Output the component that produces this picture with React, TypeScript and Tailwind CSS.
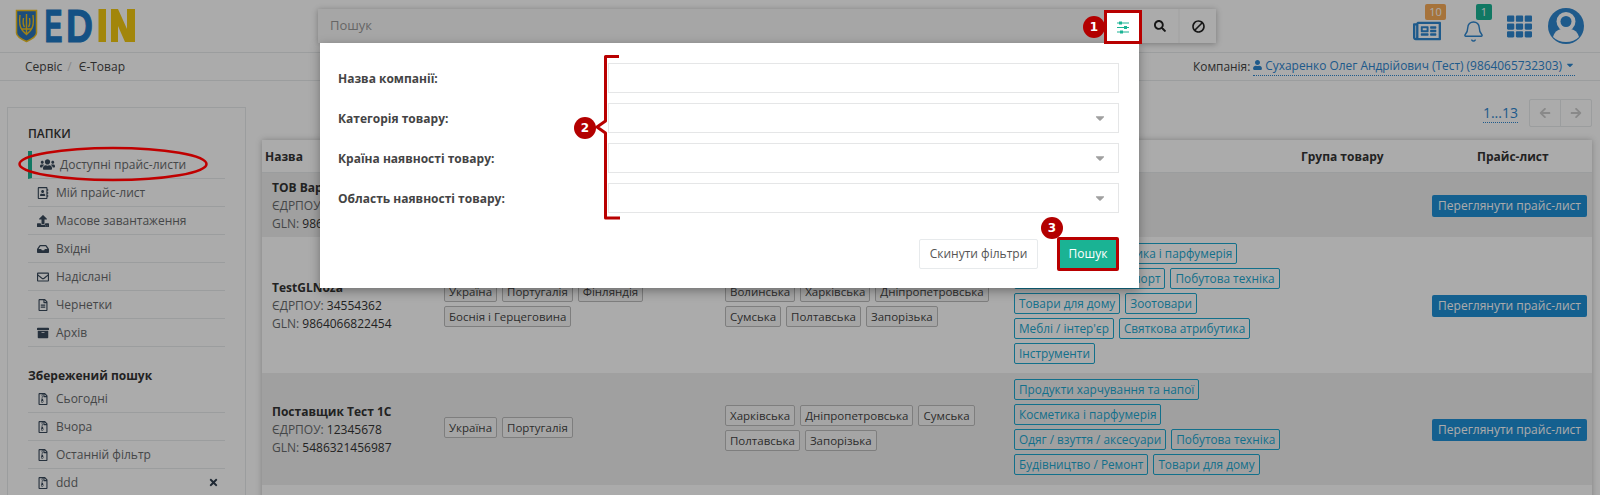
import React from 'react';
import { Bell } from 'lucide-react';
import {
    FaArchive, FaArrowLeft, FaArrowRight, FaBan, FaCaretDown, FaInbox, FaRegAddressBook,
    FaRegEnvelope, FaRegFileAlt, FaRegFileArchive, FaRegNewspaper, FaSearch, FaTh, FaTimes, FaUpload, FaUser, FaUsers,
} from 'react-icons/fa';

const folders = [
    { label: 'Мій прайс-лист', icon: FaRegAddressBook },
    { label: 'Масове завантаження', icon: FaUpload },
    { label: 'Вхідні', icon: FaInbox },
    { label: 'Надіслані', icon: FaRegEnvelope },
    { label: 'Чернетки', icon: FaRegFileAlt },
    { label: 'Архів', icon: FaArchive },
];

const savedSearches = ['Сьогодні', 'Вчора', 'Останній фільтр', 'ddd'];

const rows = [
    {
        name: 'ТОВ Варус', edrpou: '30982361', gln: '9864066822100', countries: [], regions: [], groups: [],
        rowClass: 'bg-[#efefef] min-h-[64px]', action: true,
    },
    {
        name: 'TestGLNoza', edrpou: '34554362', gln: '9864066822454',
        countries: ['Україна', 'Португалія', 'Фінляндія', 'Боснія і Герцеговина'],
        regions: ['Волинська', 'Харківська', 'Дніпропетровська', 'Сумська', 'Полтавська', 'Запорізька'],
        groups: ['Продукти і', 'Косметика і парфумерія', 'Авто-товари / транспорт', 'Побутова техніка', 'Товари для дому', 'Зоотовари', "Меблі / інтер'єр", 'Святкова атрибутика', 'Інструменти'],
        rowClass: 'bg-white min-h-[136px]', action: true,
    },
    {
        name: 'Поставщик Тест 1С', edrpou: '12345678', gln: '5486321456987',
        countries: ['Україна', 'Португалія'],
        regions: ['Харківська', 'Дніпропетровська', 'Сумська', 'Полтавська', 'Запорізька'],
        groups: ['Продукти харчування та напої', 'Косметика і парфумерія', 'Одяг / взуття / аксесуари', 'Побутова техніка', 'Будівництво / Ремонт', 'Товари для дому'],
        rowClass: 'bg-[#efefef] min-h-[112px]', action: true,
    },
    {
        name: '', edrpou: '', gln: '', countries: [], regions: [],
        groups: ['Продукти і', 'Косметика і парфумерія', 'Одяг / взуття / аксесуари', 'Побутова техніка', 'Будівництво / Ремонт', 'Товари для дому', 'Зоотовари', 'Інструменти'],
        rowClass: 'bg-white min-h-[136px]', action: false,
    },
];

const fields = [
    { label: 'Назва компанії:', select: false },
    { label: 'Категорія товару:', select: true },
    { label: 'Країна наявності товару:', select: true },
    { label: 'Область наявності товару:', select: true },
];

const Logo = () => (
    <svg width="120" height="34" viewBox="0 0 120 34" className="shrink-0">
        <path d="M1.5 1.5 H21.5 V24 Q21.5 28 11.5 32.5 Q1.5 28 1.5 24 Z" fill="#2a74b8" stroke="#f0c020" strokeWidth="1.5" />
        <path d="M11.5 5 V25 M5 6 Q3.5 17 7.5 21.5 L11.5 25.5 L15.5 21.5 Q19.5 17 18 6 M8.5 9 Q7.5 15 9.5 18 M14.5 9 Q15.5 15 13.5 18 M6.5 20 H16.5" fill="none" stroke="#f0c020" strokeWidth="1.4" />
        <text x="29.5" y="33" fontFamily="Liberation Sans" fontWeight="700" fontSize="46" textLength="18" lengthAdjust="spacingAndGlyphs" fill="#1f7ac5" stroke="#1f7ac5" strokeWidth="1">E</text>
        <text x="51" y="33" fontFamily="Liberation Sans" fontWeight="700" fontSize="46" textLength="27" lengthAdjust="spacingAndGlyphs" fill="#1f7ac5" stroke="#1f7ac5" strokeWidth="1">D</text>
        <rect x="83.5" y="0" width="7.5" height="33" fill="#f2c811" />
        <path d="M96 0 H103 L112 20 V33 H110 L103 17 V33 H96 Z" fill="#f2c811" />
        <rect x="112" y="0" width="8" height="33" fill="#f2c811" />
    </svg>
);

const Avatar = () => (
    <svg width="36" height="36" viewBox="0 0 36 36">
        <circle cx="18" cy="18" r="18" fill="#2e86cf" />
        <path d="M5 29 Q7 22 13 21 H23 Q29 22 31 29 Q26 34 18 34 Q10 34 5 29 Z" fill="#fff" />
        <circle cx="18" cy="13.5" r="9.5" fill="#fff" />
        <circle cx="18" cy="13.5" r="5.5" fill="#2e86cf" />
    </svg>
);

const Tag = ({ children, accent }: { children: React.ReactNode; accent?: boolean }) => (
    <span className={`inline-block h-[21px] mb-[4px] px-[4px] border rounded-[2px] leading-[19px] whitespace-nowrap ${accent ? 'text-[11.8px] border-[#1ca7cf] text-[#1ca7cf]' : 'text-[11.5px] border-[#bdbdbd] text-[#444] bg-[#f7f7f7]'}`}>
        {children}
    </span>
);

const NavRow = ({ label, icon: Icon, trailing }: { label: string; icon: React.ComponentType<{ className?: string }>; trailing?: boolean }) => (
    <div className="h-[28px] flex items-center pl-[9px] pr-[6px] border-b border-[#e7eaec] text-[12px] text-[#676a6c]">
        <Icon className="w-[12px] h-[12px] mr-[7px] text-[#3a4a5c]" />
        <span>{label}</span>
        {trailing && <FaTimes className="ml-auto w-[11px] h-[11px] text-[#2f3e4e]" />}
    </div>
);

const Badge = ({ n, className }: { n: number; className: string }) => (
    <div className={`absolute w-[22px] h-[22px] rounded-full bg-[#b30000] text-white font-['DejaVu_Sans',sans-serif] text-[12px] font-bold flex items-center justify-center ${className}`}>
        {n}
    </div>
);

export default function App() {
    return (
        <div className="relative h-[495px] w-[1600px] overflow-hidden bg-white font-['Open_Sans',sans-serif] text-[12px] text-[#676a6c]">
            {/* шапка */}
            <header className="h-[53px] flex items-center pl-[15px] border-b border-[#e7eaec]">
                <Logo />
                <div className="ml-[183px] w-[898px] h-[34px] flex items-stretch bg-[#f8f8f8] shadow-[0_1px_6px_rgba(0,0,0,0.3)]">
                    <span className="flex-1 pl-[12px] text-[13px] leading-[32px] text-[#999]">Пошук</span>
                    <div className="w-[38px]" />
                    <div className="w-[36px] ml-[1px] bg-white flex items-center justify-center"><FaSearch className="w-[12px] h-[12px] text-[#222]" /></div>
                    <div className="w-[36px] ml-[2px] bg-white flex items-center justify-center"><FaBan className="w-[13px] h-[13px] text-[#222] -scale-x-100" /></div>
                </div>
                <div className="ml-[197px] flex items-center">
                    <div className="relative w-[28px] h-[36px] flex items-end">
                        <FaRegNewspaper className="w-[30px] h-[26px] text-[#2e86cf]" />
                        <span className="absolute left-[12px] top-[-4px] w-[21px] h-[16px] rounded-[2px] bg-[#f8ac59] text-white text-[11px] leading-[16px] text-center">10</span>
                    </div>
                    <div className="relative ml-[21px] w-[23px] h-[36px] flex items-end">
                        <Bell size={25} strokeWidth={1.5} className="text-[#2e86cf]" />
                        <span className="absolute left-[14px] top-[-4px] w-[16px] h-[16px] rounded-[2px] bg-[#1ab394] text-white text-[11px] leading-[16px] text-center">1</span>
                    </div>
                    <FaTh className="ml-[22px] w-[25px] h-[25px] text-[#2e86cf]" />
                    <div className="ml-[16px]"><Avatar /></div>
                </div>
            </header>

            {/* хлібні крихти */}
            <div className="h-[28px] flex items-center pl-[25px] pr-[25px] border-b border-[#e7eaec] text-[#444]">
                <span>Сервіс</span>
                <span className="mx-[5px] text-[#ccc]">/</span>
                <span className="ml-[2px]">Є-Товар</span>
                <span className="ml-auto text-[11.9px]">Компанія:</span>
                <span className="ml-[3px] pb-[1px] flex items-center border-b border-dotted border-[#2e86cf] text-[11.9px] text-[#2e86cf]">
                    <FaUser className="w-[9px] h-[10px] mr-[3px]" />
                    Сухаренко Олег Андрійович (Тест) (9864065732303)
                    <FaCaretDown className="w-[10px] h-[10px] ml-[3px]" />
                </span>
            </div>

            <div className="flex items-start">
                {/* папки */}
                <aside className="ml-[7px] mt-[26px] w-[239px] h-[400px] pt-[17px] pl-[20px] pr-[20px] border border-[#e7eaec]">
                    <div className="h-[26px] font-semibold text-[#333] leading-[18px]">ПАПКИ</div>
                    <div className="h-[28px] flex items-center pl-[8px] border-l-[4px] border-b border-[#e7eaec] border-l-[#1ab394] text-[#676a6c]">
                        <FaUsers className="w-[15px] h-[15px] mr-[5px] text-[#3a4a5c]" />
                        <span>Доступні прайс-листи</span>
                    </div>
                    {folders.map((f) => <NavRow key={f.label} label={f.label} icon={f.icon} />)}
                    <div className="mt-[20px] h-[18px] font-bold text-[#333] leading-[18px]">Збережений пошук</div>
                    {savedSearches.map((s) => <NavRow key={s} label={s} icon={FaRegFileArchive} trailing={s === 'ddd'} />)}
                </aside>

                <main className="ml-[16px] mt-[18px] w-[1330px]">
                    <div className="h-[28px] mb-[13px] flex items-center justify-end">
                        <span className="mr-[11px] pb-[1px] border-b border-dotted border-[#2e86cf] text-[14px] leading-[17px] text-[#2e86cf]">1...13</span>
                        <div className="w-[32px] h-[28px] flex items-center justify-center border border-[#e7eaec] rounded-l-[2px]"><FaArrowLeft className="w-[12px] h-[12px] text-[#ccc]" /></div>
                        <div className="w-[32px] h-[28px] -ml-[1px] flex items-center justify-center border border-[#e7eaec] rounded-r-[2px]"><FaArrowRight className="w-[12px] h-[12px] text-[#ccc]" /></div>
                    </div>

                    <div className="shadow-[0_0_6px_rgba(0,0,0,0.25)]">
                        <div className="h-[33px] pt-[2px] grid grid-cols-[182px_281px_289px_418px_160px] items-center border-b border-[#e7eaec] font-bold text-[#333]">
                            <span className="pl-[3px]">Назва</span>
                            <span />
                            <span />
                            <span className="pl-[287px] whitespace-nowrap">Група товару</span>
                            <span className="pl-[45px] whitespace-nowrap">Прайс-лист</span>
                        </div>
                        {rows.map((row) => (
                            <div key={row.gln + row.rowClass} className={`grid grid-cols-[182px_281px_289px_418px_160px] items-center ${row.rowClass}`}>
                                <div className="pl-[10px] pt-[1px] whitespace-nowrap">
                                    {row.name && (
                                        <>
                                            <div className="font-bold text-[#333]">{row.name}</div>
                                            <div>ЄДРПОУ: <span className="text-[#333]">{row.edrpou}</span></div>
                                            <div>GLN: <span className="text-[#333]">{row.gln}</span></div>
                                        </>
                                    )}
                                </div>
                                <div className="pt-[1px] flex flex-wrap gap-x-[5px] pr-[4px]">
                                    {row.countries.map((t) => <Tag key={t}>{t}</Tag>)}
                                </div>
                                <div className="pt-[1px] flex flex-wrap gap-x-[5px] pr-[4px]">
                                    {row.regions.map((t) => <Tag key={t}>{t}</Tag>)}
                                </div>
                                <div className="w-[272px] flex flex-wrap gap-x-[5px]">
                                    {row.groups.map((t) => <Tag key={t} accent>{t}</Tag>)}
                                </div>
                                <div className="pt-[1px]">
                                    {row.action && (
                                        <span className="inline-block h-[22px] w-[155px] rounded-[2px] bg-[#1f8fd6] text-center text-white leading-[22px] whitespace-nowrap">Переглянути прайс-лист</span>
                                    )}
                                </div>
                            </div>
                        ))}
                    </div>
                </main>
            </div>

            {/* затемнення */}
            <div className="absolute inset-0 bg-black/[0.33]" />

            {/* модальне вікно фільтрів */}
            <div className="absolute left-[320px] top-[43px] w-[819px] h-[245px] pt-[20px] pl-[18px] pr-[20px] bg-white shadow-[0_3px_10px_rgba(0,0,0,0.35)]">
                {fields.map((f) => (
                    <div key={f.label} className="h-[30px] mb-[10px] flex items-center">
                        <label className="w-[270px] pt-[2px] font-bold text-[#444]">{f.label}</label>
                        <div className="w-[511px] h-[30px] border border-[#e5e6e7] flex items-center justify-end pr-[11px]">
                            {f.select && <FaCaretDown className="w-[14px] h-[14px] text-[#a0a0a0]" />}
                        </div>
                    </div>
                ))}
                <div className="mt-[24px] flex items-center justify-end">
                    <button className="w-[119px] h-[30px] border border-[#e7eaec] rounded-[2px] text-[#555] bg-white">Скинути фільтри</button>
                    <button className="ml-[19px] w-[62px] h-[34px] border-[3px] border-[#b80000] rounded-[2px] bg-[#1ab394] text-white">Пошук</button>
                </div>
            </div>

            {/* анотації */}
            <div className="absolute left-[1104px] top-[10px] w-[38px] h-[34px] bg-white border-[3px] border-[#b80000] flex items-center justify-center">
                <svg width="14" height="13" viewBox="0 0 14 13">
                    <path d="M1 2H13M1 6.5H13M1 11H13" stroke="#1ab394" strokeWidth="1" fill="none" />
                    <rect x="3" y="0.5" width="3" height="3" fill="#1ab394" />
                    <rect x="8" y="5" width="3" height="3" fill="#1ab394" />
                    <rect x="4" y="9.5" width="3" height="3" fill="#1ab394" />
                </svg>
            </div>
            <Badge n={1} className="left-[1083px] top-[16px]" />
            <Badge n={2} className="left-[574px] top-[117px]" />
            <Badge n={3} className="left-[1041px] top-[217px]" />
            <svg className="absolute left-[590px] top-[52px]" width="34" height="170" viewBox="0 0 34 170">
                <path d="M29 4.5 H15.5 V69 L7 75 L15.5 81 V166 H30" fill="none" stroke="#b80000" strokeWidth="3" strokeLinejoin="round" />
            </svg>
            <svg className="absolute left-[17px] top-[145px]" width="192" height="38" viewBox="0 0 192 38">
                <ellipse cx="96" cy="19" rx="93.5" ry="16" fill="none" stroke="#c00000" strokeWidth="2.5" />
            </svg>
        </div>
    );
}
